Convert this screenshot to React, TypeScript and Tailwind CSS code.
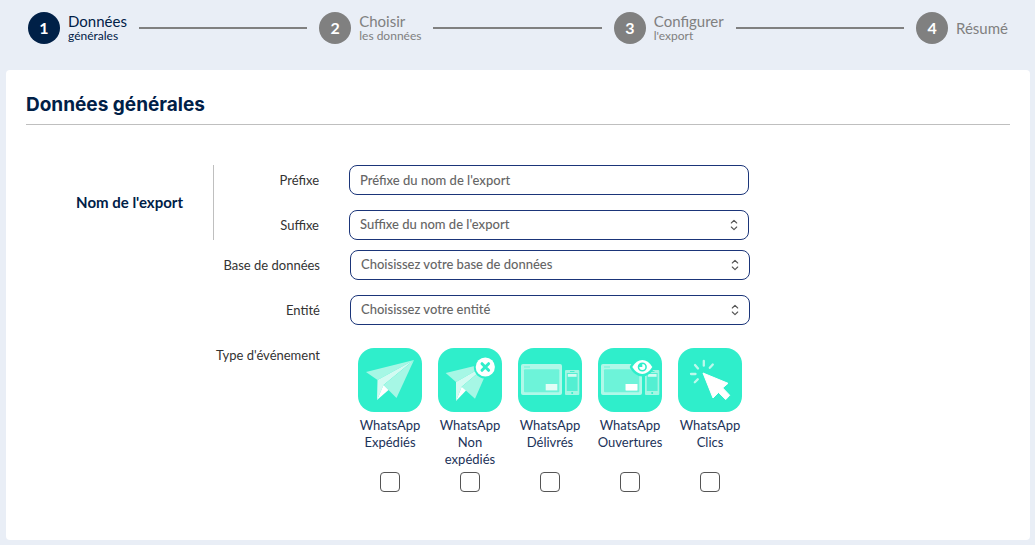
import { useState } from 'react'
import type { ReactNode } from 'react'

const steps = [
  { title: 'Données', subtitle: 'générales' },
  { title: 'Choisir', subtitle: 'les données' },
  { title: 'Configurer', subtitle: "l'export" },
  { title: 'Résumé', subtitle: '' },
]

function Plane() {
  return (
    <>
      <path d="M8 24 56 12 19.5 32Z" fill="#a6f7e5" />
      <path d="M56 12 19.5 32 19 52 25.5 37Z" fill="#d3fbf2" />
      <path d="M56 12 25.5 37 38.5 50Z" fill="#a6f7e5" />
      <path d="M19 52 25.5 37 30.5 42Z" fill="#fff" />
    </>
  )
}

function Devices() {
  return (
    <>
      <rect x="3" y="16" width="41" height="31" rx="2" fill="#b0f8e8" />
      <rect x="6" y="21.3" width="35.3" height="23" rx="1" fill="#6df3d9" />
      <path d="M6.5 19h1M8.5 19h1M10.5 19h1" stroke="#2feecb" />
      <rect x="27.7" y="36" width="11.6" height="6.4" fill="#e3fdf6" />
      <rect x="47" y="22" width="14.3" height="25" rx="1" fill="#a3f6e3" />
      <rect x="48.8" y="25" width="10.8" height="18" fill="#53efd2" />
      <path d="M52 23.5h4.5" stroke="#2feecb" strokeWidth=".8" />
      <rect x="49.8" y="26" width="8.8" height="2.8" fill="#d3fbf2" />
      <circle cx="54.2" cy="45" r="1" fill="#2feecb" />
    </>
  )
}

function PlaneFailed() {
  return (
    <>
      <path d="M7.7 25 53 14 18 34Z" fill="#a6f7e5" />
      <path d="M53 14 18 34 18 53 23.7 38.7Z" fill="#d3fbf2" />
      <path d="M53 14 23.7 38.7 37 50.7Z" fill="#a6f7e5" />
      <path d="M18 53 23.7 38.7 28 42.5Z" fill="#fff" />
      <circle cx="47.3" cy="19" r="11.5" fill="#2feecb" />
      <circle cx="47.3" cy="19" r="9.6" fill="#fff" />
      <path d="m44 15.7 6.6 6.6m0-6.6L44 22.3" stroke="#2feecb" strokeWidth="3" strokeLinecap="round" />
    </>
  )
}

function DevicesSeen() {
  return (
    <>
      <Devices />
      <rect x="27.7" y="36" width="11.6" height="6.4" fill="#fff" />
      <path
        d="M34.3 19Q38.5 12 44.3 12T54.3 19Q50 26 44.3 26T34.3 19Z"
        fill="#fff"
        stroke="#2feecb"
        strokeWidth="5"
        strokeLinejoin="round"
        paintOrder="stroke"
      />
      <circle cx="44.3" cy="19" r="3.8" fill="#fff" stroke="#2feecb" strokeWidth="1.6" />
      <path d="M44.3 19v-3.5a3.5 3.5 0 0 0-3.5 3.5Z" fill="#2feecb" />
    </>
  )
}

function Click() {
  return (
    <>
      <path
        d="M13 26h4.5M16.8 34.3l3-3M17 17l3 3.5M25.8 13v4.7M34.8 16.5l-3 3.3"
        stroke="#bdf9ec"
        strokeWidth="2.3"
        strokeLinecap="round"
      />
      <path
        d="M25 25 50 35.3 44.7 39.9 51.7 47.3 47.7 51.6 40.5 44.4 35 50Z"
        fill="#fff"
        stroke="#fff"
        strokeLinejoin="round"
      />
    </>
  )
}

const events = [
  { id: 'sent', label: 'WhatsApp Expédiés', icon: <Plane /> },
  { id: 'unsent', label: 'WhatsApp Non expédiés', icon: <PlaneFailed /> },
  { id: 'delivered', label: 'WhatsApp Délivrés', icon: <Devices /> },
  { id: 'opened', label: 'WhatsApp Ouvertures', icon: <DevicesSeen /> },
  { id: 'clicked', label: 'WhatsApp Clics', icon: <Click /> },
]

function Field({ id, label, children }: { id: string; label: string; children: ReactNode }) {
  return (
    <div className="flex items-center gap-[30px]">
      <label htmlFor={id} className="flex-1 pt-0.5 text-right text-[13px] text-[#333]">
        {label}
      </label>
      <div className="w-[400px]">{children}</div>
    </div>
  )
}

function Select({ id, placeholder }: { id: string; placeholder: string }) {
  return (
    <div className="relative">
      <select
        id={id}
        className="block h-[30px] w-full appearance-none rounded-lg border border-[#1b3579] bg-white px-2.5 text-[13px] font-medium text-[#666]"
      >
        <option>{placeholder}</option>
      </select>
      <svg
        viewBox="0 0 8 12"
        className="pointer-events-none absolute top-[9px] right-[11px] h-3 w-2"
        fill="none"
        stroke="#555"
        strokeWidth="1.1"
        strokeLinecap="round"
        strokeLinejoin="round"
      >
        <path d="M1.3 4 4 1.3 6.7 4M1.3 8 4 10.7 6.7 8" />
      </svg>
    </div>
  )
}

export default function App() {
  const [checked, setChecked] = useState<string[]>([])

  const toggle = (id: string) =>
    setChecked(checked.includes(id) ? checked.filter((c) => c !== id) : [...checked, id])

  return (
    <div className="min-h-screen bg-[#e9eef6] pr-[5px] pb-[5px] pl-1.5 font-['Lato',sans-serif]">
      <ol className="flex h-[70px] items-start pt-3 pr-[22px] pl-[22px]">
        {steps.map((step, i) => (
          <li key={step.title} className={`flex h-8 items-center ${i > 0 ? 'flex-auto' : ''}`}>
            {i > 0 && <span className="mx-3 h-0.5 flex-1 bg-[#808080]" />}
            <span
              className={`flex size-8 items-center justify-center rounded-full text-base font-bold text-white ${
                i === 0 ? 'bg-[#002047]' : 'bg-[#808080]'
              }`}
            >
              {i + 1}
            </span>
            <span className={`ml-2 flex flex-col ${i === 0 ? 'text-[#002047]' : 'text-[#808080]'}`}>
              <span className="text-[15px] leading-4">{step.title}</span>
              {step.subtitle && <span className="text-xs leading-[14px]">{step.subtitle}</span>}
            </span>
          </li>
        ))}
      </ol>

      <main className="rounded bg-white px-5 pt-5 pb-12">
        <h1 className="border-b border-[#bfbfbf] pt-0.5 pb-1.5 font-['Inter',sans-serif] text-[19px] leading-[26px] font-bold text-[#002047]">
          Données générales
        </h1>

        <form className="mt-10">
          <fieldset className="flex w-[723px]" aria-labelledby="export-name">
            <div className="flex w-[188px] items-center justify-end border-r border-[#bfbfbf] pr-[30px]">
              <span id="export-name" className="text-[15px] font-bold text-[#002047]">
                Nom de l'export
              </span>
            </div>
            <div className="flex flex-1 flex-col gap-[15px]">
              <Field id="prefix" label="Préfixe">
                <input
                  id="prefix"
                  type="text"
                  placeholder="Préfixe du nom de l'export"
                  className="block h-[30px] w-full rounded-lg border border-[#1b3579] px-2.5 text-[13px] font-medium text-[#666] placeholder:text-[#666]"
                />
              </Field>
              <Field id="suffix" label="Suffixe">
                <Select id="suffix" placeholder="Suffixe du nom de l'export" />
              </Field>
            </div>
          </fieldset>

          <div className="mt-2.5 flex w-[724px] flex-col gap-[15px]">
            <Field id="database" label="Base de données">
              <Select id="database" placeholder="Choisissez votre base de données" />
            </Field>
            <Field id="entity" label="Entité">
              <Select id="entity" placeholder="Choisissez votre entité" />
            </Field>
            <fieldset className="flex gap-[30px]" aria-labelledby="event-type">
              <span id="event-type" className="flex-1 pt-1.5 text-right text-[13px] text-[#333]">
                Type d'événement
              </span>
              <div className="flex w-[400px] pt-2">
                {events.map((event) => (
                  <label key={event.id} className="flex w-20 flex-col items-center px-2">
                    <svg viewBox="0 0 64 64" className="size-16 rounded-2xl bg-[#2feecb]" fill="none">
                      {event.icon}
                    </svg>
                    <span className="mt-[5px] min-h-[51px] text-center text-[13px] leading-[17px] text-[#1b3259]">
                      {event.label}
                    </span>
                    <input
                      type="checkbox"
                      checked={checked.includes(event.id)}
                      onChange={() => toggle(event.id)}
                      className="mt-1 size-5 appearance-none rounded border border-[#555] bg-white checked:bg-[#002047]"
                    />
                  </label>
                ))}
              </div>
            </fieldset>
          </div>
        </form>
      </main>
    </div>
  )
}
